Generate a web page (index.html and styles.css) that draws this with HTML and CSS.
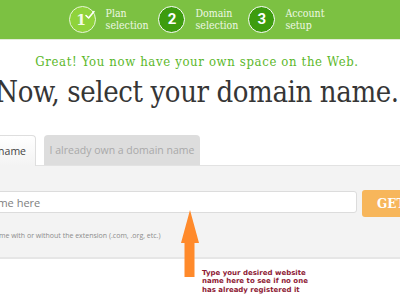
FILE: index.html
```html
<!DOCTYPE html>
<html lang="en">
<head>
<meta charset="utf-8">
<title>Select your domain name</title>
<link rel="stylesheet" href="styles.css">
</head>
<body>
<header class="steps-bar">
  <div class="steps">
    <div class="step">
      <div class="circle circle-done">
        <span class="num num-done">1</span>
        <svg class="check" width="12" height="12" viewBox="0 0 12 12"><path d="M2 6.5 L4.6 9 L10 2.5" fill="none" stroke="#ffffff" stroke-width="1.6" stroke-linecap="round" stroke-linejoin="round"/></svg>
      </div>
      <div class="label">Plan<br>selection</div>
    </div>
    <div class="step">
      <div class="circle"><span class="num">2</span></div>
      <div class="label">Domain<br>selection</div>
    </div>
    <div class="step">
      <div class="circle"><span class="num">3</span></div>
      <div class="label">Account<br>setup</div>
    </div>
  </div>
</header>

<main class="page">
  <p class="great">Great! You now have your own space on the Web.</p>
  <h1 class="title">Now, select your domain name.</h1>

  <div class="tabs-wrap">
    <div class="tabs">
      <div class="tab tab-active">Register a new domain name</div>
      <div class="tab tab-idle">I already own a domain name</div>
    </div>
  </div>

  <section class="panel">
    <div class="panel-inner">
      <div class="form-row">
        <input class="domain-input" type="text" placeholder="Enter your domain name here">
        <button class="get-btn">GET IT!</button>
      </div>
      <p class="hint">Enter a domain name with or without the extension (.com, .org, etc.)</p>
    </div>
  </section>
</main>

<div class="annotation">
  <svg class="arrow" width="20" height="68" viewBox="0 0 20 68"><path d="M10 0 L19 33 L14.5 33 L14.5 67 L4.5 67 L4.5 33 L1 33 Z" fill="#ff8a2b"/></svg>
  <p class="note">Type your desired website<br>name here to see if no one<br>has already registered it</p>
</div>
</body>
</html>
```
FILE: styles.css
```css
* { box-sizing: border-box; }
html, body { margin: 0; padding: 0; }
body {
  width: 400px;
  height: 300px;
  overflow: hidden;
  position: relative;
  background: #ffffff;
  font-family: "Open Sans", "Liberation Sans", sans-serif;
}

.steps-bar {
  height: 40px;
  background: #7cc142;
  border-bottom: 1px solid #e3ecd9;
  display: flex;
  justify-content: center;
  padding-right: 7px;
}
.steps {
  display: flex;
  align-items: center;
  gap: 10px;
}
.step {
  display: flex;
  align-items: center;
  gap: 10px;
}
.circle {
  position: relative;
  width: 27px;
  height: 27px;
  border-radius: 50%;
  border: 1.5px solid #ffffff;
  background: #3d9c0e;
  display: flex;
  align-items: center;
  justify-content: center;
}
.circle-done {
  background: #8fd33b;
  border-color: #e9f6dc;
}
.num {
  color: #ffffff;
  font-family: "Roboto", "Liberation Sans", sans-serif;
  font-weight: 700;
  font-size: 15px;
  line-height: 1;
}
.num-done {
  font-family: "DejaVu Serif", "Liberation Serif", serif;
  font-weight: 700;
  font-size: 14px;
  color: #f2fae9;
  margin-left: -2px;
}
.check {
  position: absolute;
  top: 2px;
  right: -1px;
}
.label {
  color: #eef8e4;
  font-family: "DejaVu Serif", "Liberation Serif", serif;
  font-stretch: condensed;
  font-size: 10.5px;
  line-height: 11.5px;
}

.page {
  display: flex;
  flex-direction: column;
  align-items: center;
  padding-right: 6px;
}
.great {
  margin: 14px 0 0;
  color: #5cb82b;
  font-family: "DejaVu Serif", "Liberation Serif", serif;
  font-stretch: condensed;
  font-size: 13px;
  letter-spacing: 0.65px;
  line-height: 16px;
  white-space: nowrap;
}
.title {
  margin: 4px 0 0;
  color: #363636;
  font-family: "DejaVu Serif", "Liberation Serif", serif;
  font-stretch: condensed;
  font-weight: 400;
  font-size: 29px;
  letter-spacing: -0.4px;
  line-height: 36px;
  white-space: nowrap;
}

.tabs-wrap {
  width: 640px;
  margin-top: 25px;
  flex: none;
}
.tabs {
  display: flex;
  gap: 8px;
  padding-left: 9px;
}
.tab {
  height: 30px;
  border-radius: 4px 4px 0 0;
  font-size: 10.5px;
  display: flex;
  align-items: center;
  justify-content: center;
  white-space: nowrap;
}
.tab-active {
  width: 150px;
  background: linear-gradient(#ffffff, #f3f3f3);
  border: 1px solid #dedede;
  border-bottom: none;
  color: #444444;
  justify-content: flex-end;
  padding-right: 9px;
  position: relative;
  z-index: 1;
  margin-bottom: -1px;
  height: 31px;
}
.tab-idle {
  width: 156px;
  background: #dddddd;
  color: #a9a9a9;
}

.panel {
  align-self: stretch;
  margin-right: -6px;
  background: #f3f3f3;
  border-top: 1px solid #e2e2e2;
  border-bottom: 2px solid #e6e6e6;
  height: 94px;
  display: flex;
  justify-content: center;
  padding-right: 6px;
}
.panel-inner {
  width: 640px;
  flex: none;
  padding: 25px 0 0 0;
}
.form-row {
  display: flex;
  align-items: flex-start;
  gap: 5px;
}
.domain-input {
  width: 480px;
  height: 22px;
  border: 1px solid #dcdcdc;
  border-radius: 3px;
  background: #ffffff;
  padding: 0 8px;
  font-family: "Open Sans", "Liberation Sans", sans-serif;
  font-size: 11px;
  color: #555555;
  outline: none;
}
.domain-input::placeholder { color: #808080; }
.get-btn {
  width: 90px;
  height: 27px;
  margin-top: -1px;
  border: none;
  border-radius: 3px;
  background: #f7b65b;
  color: #ffffff;
  font-family: "DejaVu Serif", "Liberation Serif", serif;
  font-weight: 700;
  font-size: 12px;
  text-align: left;
  padding: 0 0 0 15px;
}
.hint {
  margin: 14px 0 0;
  padding-left: 62px;
  color: #8c8c8c;
  font-size: 7px;
  line-height: 10px;
  white-space: nowrap;
}

.annotation {
  position: absolute;
  left: 180px;
  top: 210px;
  width: 140px;
  height: 90px;
}
.arrow {
  position: absolute;
  left: 0;
  top: 0;
}
.note {
  position: absolute;
  left: 22px;
  top: 59px;
  margin: 0;
  color: #8e1a35;
  font-family: "DejaVu Sans", Verdana, sans-serif;
  font-weight: 700;
  font-size: 7px;
  line-height: 8.4px;
  white-space: nowrap;
}
```
